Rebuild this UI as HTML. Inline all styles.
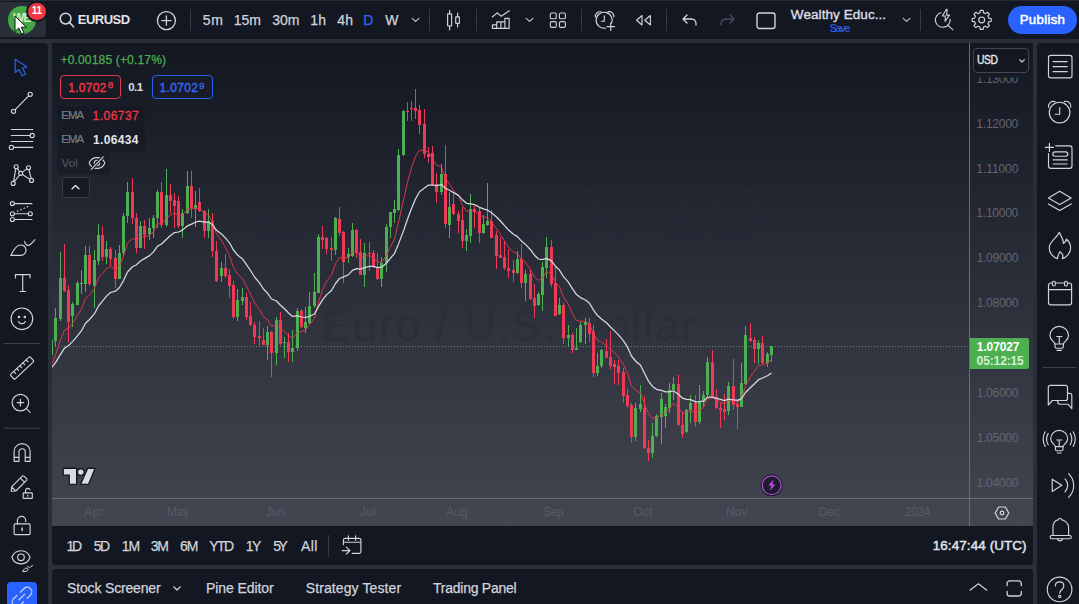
<!DOCTYPE html>
<html lang="en">
<head>
<meta charset="utf-8">
<title>EURUSD chart</title>
<style>
*{box-sizing:border-box;margin:0;padding:0}
html,body{width:1079px;height:604px;overflow:hidden;background:#2a2e39}
body{position:relative;font-family:"Liberation Sans",sans-serif;color:#d1d4dc;font-size:14px;-webkit-font-smoothing:antialiased}
.abs{position:absolute}
.t{position:absolute;white-space:nowrap;line-height:1}
#topbar{position:absolute;left:0;top:0;width:1079px;height:39px;background:#131722;border-top:1px solid #262a35}
#left{position:absolute;left:0;top:43px;width:48px;height:561px;background:#131722;border-top-right-radius:4px}
#right{position:absolute;left:1037px;top:43px;width:42px;height:561px;background:#131722;border-top-left-radius:4px}
#chart{position:absolute;left:52px;top:43px;width:981px;height:483px;background:linear-gradient(#131722,#434651);overflow:hidden}
#range{position:absolute;left:52px;top:526px;width:981px;height:38.6px;background:#131722;border-radius:0 0 4px 4px}
#bottom{position:absolute;left:52px;top:569px;width:981px;height:35px;background:#131722;border-radius:4px 4px 0 0}
.chartsvg{position:absolute;left:0;top:0}
.sep{position:absolute;width:1px;background:#363a45}
.hsep{position:absolute;height:1px;background:#434651}
svg.ic{position:absolute;overflow:visible;fill:none;stroke:#d1d4dc;stroke-width:1.2;stroke-linecap:round;stroke-linejoin:round}
.wm{position:absolute;white-space:nowrap;color:rgba(38,42,53,0.43);line-height:1}
.scale{position:absolute;left:925.5px;font-size:11.5px;color:#70737f;line-height:1;white-space:nowrap}
.tm{position:absolute;top:464px;font-size:12px;color:#666975;line-height:1;white-space:nowrap;transform:translateX(-50%)}
.lg{position:absolute;background:rgba(19,23,34,0.45);border-radius:2px}
</style>
</head>
<body>
<div id="topbar">
  <!-- avatar -->
  <div class="abs" style="left:0;top:1px;width:46px;height:35px;background:#2a2e39;border-radius:0 4px 4px 0"></div>
  <div class="abs" style="left:8px;top:5px;width:28px;height:28px;border-radius:50%;background:#43a843"></div>
  <div class="t" style="left:13px;top:11px;font-size:12px;font-weight:bold;color:#cfeccf;letter-spacing:-1px">WE</div>
  <div class="abs" style="left:26px;top:0px;width:22px;height:21px;border-radius:11px;background:#131722"></div>
  <div class="abs" style="left:28px;top:2px;width:18px;height:17px;border-radius:9px;background:#f23645"></div>
  <div class="t" style="left:31.8px;top:4.6px;font-size:10px;font-weight:bold;color:#fff;letter-spacing:-0.2px">11</div>
  <!-- mouse cursor -->
  <svg class="abs" style="left:14px;top:14px;overflow:visible" width="14" height="20" viewBox="0 0 14 20"><path d="M1 1 L1 16.5 L4.8 13 L7.6 19 L10 18 L7.3 12.2 L12.4 12.2 Z" fill="#fff" stroke="#111" stroke-width="1"/></svg>
  <!-- search -->
  <svg class="ic" style="left:58px;top:10px;stroke-width:1.6" width="18" height="18" viewBox="0 0 18 18"><circle cx="7.6" cy="7.6" r="5.4"/><path d="M11.6 11.6 L15.6 15.8"/></svg>
  <svg class="ic" style="left:156px;top:10px;stroke-width:1.3" width="20" height="20" viewBox="0 0 20 20"><circle cx="10.4" cy="9.6" r="9"/><path d="M10.4 5 V14.2 M5.8 9.6 H15"/></svg>
  <div class="sep" style="left:190px;top:8px;height:22px"></div>
  <svg class="ic" style="left:411px;top:16px;stroke-width:1.15;stroke:#c2c5cd" width="9" height="6" viewBox="0 0 9 6"><path d="M1.2 1.3 L4.6 4.4 L8 1.3"/></svg>
  <div class="sep" style="left:429px;top:8px;height:22px"></div>
  <!-- candles icon -->
  <svg class="ic" style="left:444px;top:8px;stroke-width:1.15" width="20" height="24" viewBox="0 0 20 24"><path d="M5.6 1.4 V4.8 M5.6 17 V20.8 M13.55 4 V7.8 M13.55 14.3 V17.9"/><rect x="3.6" y="4.8" width="4" height="12.2" rx="0.4"/><rect x="11.7" y="7.8" width="3.7" height="6.5" rx="0.4"/></svg>
  <div class="sep" style="left:476px;top:8px;height:22px"></div>
  <!-- indicators icon -->
  <svg class="ic" style="left:491px;top:9px;stroke-width:1.15" width="20" height="20" viewBox="0 0 20 20"><path d="M1.3 7 L6.2 2.9 L10.2 6.2 L18.3 0.8"/><path d="M1.4 18.4 V14.8 H5.7 V18.4 M5.7 14.8 V11.8 H9.9 V18.4 M9.9 11.8 H13.9 V18.4 M13.9 11.8 V8.3 H18.1 V18.4 H1.4"/></svg>
  <svg class="ic" style="left:524.5px;top:16px;stroke-width:1.15;stroke:#c2c5cd" width="9" height="6" viewBox="0 0 9 6"><path d="M1.2 1.3 L4.6 4.4 L8 1.3"/></svg>
  <!-- layout grid -->
  <svg class="ic" style="left:549px;top:9px;stroke-width:1.1" width="18" height="20" viewBox="0 0 18 20"><rect x="1.3" y="3" width="6" height="5.8" rx="1.4"/><rect x="10.4" y="3" width="6" height="5.8" rx="1.4"/><rect x="1.3" y="11.6" width="6" height="5.8" rx="1.4"/><rect x="10.4" y="11.6" width="6" height="5.8" rx="1.4"/></svg>
  <div class="sep" style="left:581px;top:8px;height:22px"></div>
  <!-- alert plus -->
  <svg class="ic" style="left:593px;top:8px;stroke-width:1.15" width="24" height="24" viewBox="0 0 24 24"><path d="M18.6 14.2 A8 8 0 1 0 12.6 19.1"/><path d="M11.3 6.8 V12.2 H8.4"/><path d="M2.4 8 A4.6 4.6 0 0 1 8 2.9 M15 2.9 A4.6 4.6 0 0 1 20.8 8"/><path d="M17.8 13.8 V21.4 M14 17.6 H21.6"/></svg>
  <!-- replay -->
  <svg class="ic" style="left:634px;top:13px;stroke-width:1.15" width="18" height="12" viewBox="0 0 18 12"><path d="M8 1.5 L2.6 6.2 L8 11 Z M16.4 1.5 L10.8 6.2 L16.4 11 Z"/></svg>
  <div class="sep" style="left:666px;top:8px;height:22px"></div>
  <!-- undo / redo -->
  <svg class="ic" style="left:682px;top:13px;stroke-width:1.3" width="15" height="12" viewBox="0 0 15 12"><path d="M5 1 L1 5 L5 9 M1 5 H9.5 A4.5 4.5 0 0 1 14 9.5 V11"/></svg>
  <svg class="ic" style="left:720px;top:13px;stroke-width:1.3;stroke:#4a4e5a" width="15" height="12" viewBox="0 0 15 12"><path d="M10 1 L14 5 L10 9 M14 5 H5.5 A4.5 4.5 0 0 0 1 9.5 V11"/></svg>
  <!-- square -->
  <svg class="ic" style="left:756px;top:11px;stroke-width:1.4" width="20" height="18" viewBox="0 0 20 18"><rect x="1" y="1" width="18" height="15.5" rx="2.5"/></svg>
  <svg class="ic" style="left:901.5px;top:16px;stroke-width:1.15;stroke:#c2c5cd" width="9" height="6" viewBox="0 0 9 6"><path d="M1.2 1.3 L4.6 4.4 L8 1.3"/></svg>
  <div class="sep" style="left:920px;top:8px;height:22px"></div>
  <!-- quick search -->
  <svg class="ic" style="left:933px;top:8px;stroke-width:1.15" width="22" height="24" viewBox="0 0 22 24"><path d="M7.9 3.7 A7.4 7.4 0 1 0 17.2 10.4"/><path d="M14.6 16.1 L19.8 20.6"/><path d="M13.5 0.3 L9.4 6.9 H12.4 L12 12.4 L16.5 6.1 H13.5 L14.2 0.6 Z" stroke-width="1.05"/></svg>
  <!-- gear -->
  <svg class="ic" style="left:971px;top:8px;stroke-width:1.15" width="22" height="22" viewBox="0 0 22 22"><circle cx="10.7" cy="10.9" r="2.9"/><path d="M8.93 3.82 L9.28 1.41 L12.12 1.41 L12.47 3.82 L14.46 4.64 L16.41 3.18 L18.42 5.19 L16.96 7.14 L17.78 9.13 L20.19 9.48 L20.19 12.32 L17.78 12.67 L16.96 14.66 L18.42 16.61 L16.41 18.62 L14.46 17.16 L12.47 17.98 L12.12 20.39 L9.28 20.39 L8.93 17.98 L6.94 17.16 L4.99 18.62 L2.98 16.61 L4.44 14.66 L3.62 12.67 L1.21 12.32 L1.21 9.48 L3.62 9.13 L4.44 7.14 L2.98 5.19 L4.99 3.18 L6.94 4.64 Z"/></svg>
  <div class="abs" style="left:1008px;top:5px;width:69px;height:28px;border-radius:14px;background:#2962ff"></div>
  <div class="t" id="sym" style="left:77.76px;top:11.86px;font-size:13px;color:#e3e5ea;letter-spacing:-0.51px;font-weight:bold;">EURUSD</div>
  <div class="t" id="tf1" style="left:202.87px;top:12.00px;font-size:14px;color:#d1d4dc;letter-spacing:0.53px;-webkit-text-stroke:0.25px #d1d4dc;">5m</div>
  <div class="t" id="tf2" style="left:233.64px;top:12.00px;font-size:14px;color:#d1d4dc;letter-spacing:0.04px;-webkit-text-stroke:0.25px #d1d4dc;">15m</div>
  <div class="t" id="tf3" style="left:272.33px;top:12.00px;font-size:14px;color:#d1d4dc;letter-spacing:-0.13px;-webkit-text-stroke:0.25px #d1d4dc;">30m</div>
  <div class="t" id="tf4" style="left:310.37px;top:12.00px;font-size:14px;color:#d1d4dc;letter-spacing:0.10px;-webkit-text-stroke:0.25px #d1d4dc;">1h</div>
  <div class="t" id="tf5" style="left:337.17px;top:12.00px;font-size:14px;color:#d1d4dc;letter-spacing:0.31px;-webkit-text-stroke:0.25px #d1d4dc;">4h</div>
  <div class="t" id="tf6" style="left:363.20px;top:12.00px;font-size:14px;color:#2f63f5;letter-spacing:0.00px;-webkit-text-stroke:0.25px #2f63f5;">D</div>
  <div class="t" id="tf7" style="left:385.29px;top:12.00px;font-size:14px;color:#d1d4dc;letter-spacing:0.00px;-webkit-text-stroke:0.25px #d1d4dc;">W</div>
  <div class="t" id="title" style="left:790.85px;top:6.75px;font-size:13.5px;color:#dcdee4;letter-spacing:0.07px;-webkit-text-stroke:0.38px #dcdee4;">Wealthy Educ...</div>
  <div class="t" id="save" style="left:829.73px;top:23.38px;font-size:10.4px;color:#2f63f5;letter-spacing:-1.07px;-webkit-text-stroke:0.15px #2f63f5;">Save</div>
  <div class="t" id="pub" style="left:1019.71px;top:11.71px;font-size:13.2px;color:#fff;letter-spacing:0.33px;-webkit-text-stroke:0.55px #fff;">Publish</div>
</div>
<style>.tf{font-size:14px;color:#d1d4dc;letter-spacing:-0.4px;-webkit-text-stroke:0.25px}</style>

<div id="left">
<svg class="ic" style="left:0;top:0;stroke-width:1.15" width="48" height="561" viewBox="0 43 48 561">
  <!-- cursor -->
  <path d="M15.2 59.2 L15.2 72.6 L19 69.6 L22.2 75.8 L25.6 74.2 L22.6 68.2 L26.8 66.8 Z" stroke="#2a5ad8" stroke-width="1.3"/>
  <!-- trend line -->
  <circle cx="30.2" cy="94.3" r="2.1"/><circle cx="13.5" cy="111.3" r="2.1"/><path d="M28.7 95.8 L15 109.8"/>
  <!-- fib -->
  <path d="M11.3 129.5 H32.8 M11.3 135.5 H30 M11.3 141.5 H32.8 M13.6 147.4 H32.8"/><circle cx="32.2" cy="135.5" r="2.1"/><circle cx="11.4" cy="147.4" r="2.1"/>
  <!-- pattern -->
  <circle cx="16.2" cy="166.7" r="2"/><circle cx="28.5" cy="167.7" r="2"/><circle cx="20.7" cy="173.3" r="2"/><circle cx="31.5" cy="180.4" r="2"/><circle cx="13.2" cy="183.4" r="2"/>
  <path d="M17.3 168.4 L19.6 171.6 M22.3 172.1 L26.9 168.9 M28.9 169.7 L31.1 178.4 M29.8 179.3 L22.4 174.4 M19.6 175 L14.3 181.7 M13.6 181.4 L15.8 168.7"/>
  <!-- forecast -->
  <circle cx="12.4" cy="203.6" r="2"/><circle cx="12.4" cy="213.7" r="2"/><circle cx="30.3" cy="213.7" r="2"/><circle cx="12.4" cy="219.5" r="2"/>
  <path d="M14.5 203.6 H32 M14.5 213.7 H28.2 M14.5 219.5 H32"/><path d="M17.4 211.2 L29.8 205.7" stroke-dasharray="0.5 3.1" stroke-width="1.3"/>
  <!-- brush -->
  <path d="M10.8 255.4 C13.5 250 15.5 246.5 19 245.3 C22.5 244.2 25.6 246.4 26 249.5 C26.3 252.6 24 255.4 21 255.4 Z"/><path d="M24.6 241.3 C25 244.6 27.4 246.2 29.6 244.9 C31.4 243.8 33.2 241.6 34.9 239.6"/>
  <!-- text T -->
  <path d="M15.4 277.9 V274.6 H30.1 V277.9 M22.7 274.6 V291.5 M19.9 291.5 H25.7"/>
  <!-- smiley -->
  <circle cx="21.9" cy="318.8" r="10.8"/><circle cx="19" cy="317" r="0.7" fill="#d1d4dc"/><circle cx="24.8" cy="317" r="0.7" fill="#d1d4dc"/><path d="M18.4 321.4 C19.8 324.4 24 324.4 25.4 321.4"/>
  <path d="M4 343.6 H40" stroke="#434651" stroke-width="1"/>
  <!-- ruler -->
  <g transform="translate(22.1 368) rotate(-43)"><rect x="-13.4" y="-3.2" width="26.8" height="6.4" rx="1"/><path d="M-8.5 -3.2 V-0.6 M-4.2 -3.2 V-0.6 M0 -3.2 V-0.6 M4.2 -3.2 V-0.6 M8.5 -3.2 V-0.6"/></g>
  <!-- zoom -->
  <circle cx="20.4" cy="402.6" r="8.3"/><path d="M20.4 399.3 V405.9 M17.1 402.6 H23.7 M26.4 408.6 L30.2 412.4"/>
  <path d="M4 428.2 H40" stroke="#434651" stroke-width="1"/>
  <!-- magnet -->
  <path d="M14.1 461.4 V451.6 A8 8 0 0 1 30.1 451.6 V461.4 H25.2 V451.8 A3.1 3.1 0 0 0 19 451.8 V461.4 Z M14.1 457.3 H19 M25.2 457.3 H30.1"/>
  <!-- pencil + lock -->
  <path d="M11.3 491.2 L11.6 486.8 L22.3 476.2 A1.2 1.2 0 0 1 24 476.2 L26.5 478.7 A1.2 1.2 0 0 1 26.5 480.4 L15.8 491 Z M11.6 486.8 L15.8 491 M20.4 478.1 L24.6 482.3"/>
  <rect x="23.2" y="492.8" width="9.1" height="5.6" rx="0.6" fill="#131722"/><path d="M25.6 492.8 V490.3 A2.2 2.2 0 0 1 29.9 489.9"/><path d="M27.8 495 V496.2"/>
  <!-- lock open -->
  <rect x="14.1" y="523.9" width="16" height="10.7" rx="1.2"/><path d="M17.4 523.9 V520.6 A4.15 4.15 0 0 1 25.7 520.6 V521.6"/><path d="M22.1 528 V530.4" stroke-width="1.5"/>
  <!-- eye -->
  <path d="M11.9 557.3 C15 548.5 27 548.5 30.1 557.3 C27 566.1 15 566.1 11.9 557.3 Z"/><circle cx="21" cy="557.3" r="3.3"/>
  <path d="M22.8 571.2 C24.2 568.6 25.6 567.6 27.2 568.2 C28.6 568.8 28.2 571 26.4 571.3 Z M27.6 566.2 C28.4 567.8 29.4 567.8 30.2 567.2 L32.6 565.4" stroke-width="1"/>
  <!-- link button -->
  <rect x="7" y="582" width="30" height="30" rx="4" fill="#2962ff" stroke="none"/>
  <g stroke="#c3d2ff" stroke-width="1.25"><path d="M20.3 592.2 L24.05 588.45 A4.6 4.6 0 0 1 30.55 594.95 L27.1 598.4 M23.6 601.7 L19.85 605.45 A4.6 4.6 0 0 1 13.35 598.95 L16.8 595.5 M19.1 599.8 L24.8 594.1"/></g>
</svg>

</div>

<div id="chart">
  <div class="wm" id="wm1" style="left:201.6px;top:129.5px;font-size:80px;letter-spacing:3.1px">EURUSD, 1D</div>
  <div class="wm" id="wm2" style="left:269.3px;top:260.6px;font-size:44px;letter-spacing:1.9px">Euro / U.S. Dollar</div>
<svg class="chartsvg" width="981" height="483" viewBox="52 43 981 483">
<line x1="52" y1="346.5" x2="970" y2="346.5" stroke="#86cc8a" stroke-width="1" stroke-dasharray="1 2" opacity="0.6"/>
<g shape-rendering="crispEdges"><rect x="51" y="340" width="1" height="15" fill="#4caf50"/><rect x="55" y="308" width="1" height="39" fill="#4caf50"/><rect x="60" y="252" width="1" height="69" fill="#4caf50"/><rect x="64" y="244" width="1" height="48" fill="#ef3a57"/><rect x="68" y="285" width="1" height="57" fill="#ef3a57"/><rect x="72" y="302" width="1" height="25" fill="#4caf50"/><rect x="77" y="281" width="1" height="24" fill="#4caf50"/><rect x="81" y="270" width="1" height="24" fill="#4caf50"/><rect x="85" y="246" width="1" height="46" fill="#4caf50"/><rect x="89" y="246" width="1" height="40" fill="#ef3a57"/><rect x="94" y="250" width="1" height="58" fill="#4caf50"/><rect x="98" y="224" width="1" height="41" fill="#4caf50"/><rect x="102" y="226" width="1" height="35" fill="#ef3a57"/><rect x="106" y="241" width="1" height="23" fill="#4caf50"/><rect x="110" y="247" width="1" height="19" fill="#ef3a57"/><rect x="115" y="250" width="1" height="38" fill="#ef3a57"/><rect x="119" y="245" width="1" height="34" fill="#4caf50"/><rect x="123" y="213" width="1" height="43" fill="#4caf50"/><rect x="127" y="182" width="1" height="41" fill="#4caf50"/><rect x="132" y="178" width="1" height="46" fill="#ef3a57"/><rect x="136" y="213" width="1" height="40" fill="#ef3a57"/><rect x="140" y="221" width="1" height="27" fill="#4caf50"/><rect x="144" y="220" width="1" height="29" fill="#ef3a57"/><rect x="149" y="218" width="1" height="22" fill="#4caf50"/><rect x="153" y="215" width="1" height="23" fill="#4caf50"/><rect x="157" y="190" width="1" height="38" fill="#4caf50"/><rect x="161" y="182" width="1" height="46" fill="#ef3a57"/><rect x="166" y="169" width="1" height="58" fill="#4caf50"/><rect x="170" y="184" width="1" height="29" fill="#ef3a57"/><rect x="174" y="193" width="1" height="35" fill="#ef3a57"/><rect x="178" y="196" width="1" height="32" fill="#ef3a57"/><rect x="182" y="209" width="1" height="29" fill="#4caf50"/><rect x="187" y="171" width="1" height="43" fill="#4caf50"/><rect x="191" y="171" width="1" height="47" fill="#ef3a57"/><rect x="195" y="191" width="1" height="36" fill="#4caf50"/><rect x="199" y="188" width="1" height="24" fill="#ef3a57"/><rect x="204" y="210" width="1" height="28" fill="#ef3a57"/><rect x="208" y="209" width="1" height="29" fill="#4caf50"/><rect x="212" y="213" width="1" height="44" fill="#ef3a57"/><rect x="216" y="241" width="1" height="41" fill="#ef3a57"/><rect x="221" y="262" width="1" height="20" fill="#4caf50"/><rect x="225" y="254" width="1" height="24" fill="#ef3a57"/><rect x="229" y="269" width="1" height="29" fill="#ef3a57"/><rect x="233" y="281" width="1" height="38" fill="#ef3a57"/><rect x="237" y="289" width="1" height="32" fill="#4caf50"/><rect x="242" y="288" width="1" height="17" fill="#4caf50"/><rect x="246" y="293" width="1" height="27" fill="#ef3a57"/><rect x="250" y="302" width="1" height="24" fill="#ef3a57"/><rect x="254" y="322" width="1" height="22" fill="#ef3a57"/><rect x="259" y="321" width="1" height="25" fill="#ef3a57"/><rect x="263" y="328" width="1" height="17" fill="#ef3a57"/><rect x="267" y="326" width="1" height="34" fill="#4caf50"/><rect x="271" y="331" width="1" height="46" fill="#ef3a57"/><rect x="276" y="317" width="1" height="48" fill="#4caf50"/><rect x="280" y="312" width="1" height="33" fill="#ef3a57"/><rect x="284" y="337" width="1" height="21" fill="#4caf50"/><rect x="288" y="333" width="1" height="29" fill="#ef3a57"/><rect x="292" y="330" width="1" height="32" fill="#4caf50"/><rect x="297" y="308" width="1" height="43" fill="#4caf50"/><rect x="301" y="309" width="1" height="19" fill="#ef3a57"/><rect x="305" y="307" width="1" height="26" fill="#4caf50"/><rect x="309" y="292" width="1" height="32" fill="#4caf50"/><rect x="314" y="273" width="1" height="35" fill="#4caf50"/><rect x="318" y="234" width="1" height="59" fill="#4caf50"/><rect x="322" y="226" width="1" height="23" fill="#ef3a57"/><rect x="326" y="237" width="1" height="17" fill="#ef3a57"/><rect x="331" y="237" width="1" height="24" fill="#ef3a57"/><rect x="335" y="217" width="1" height="38" fill="#4caf50"/><rect x="339" y="207" width="1" height="29" fill="#ef3a57"/><rect x="343" y="231" width="1" height="52" fill="#ef3a57"/><rect x="348" y="248" width="1" height="15" fill="#4caf50"/><rect x="352" y="223" width="1" height="34" fill="#4caf50"/><rect x="356" y="229" width="1" height="29" fill="#ef3a57"/><rect x="360" y="239" width="1" height="36" fill="#ef3a57"/><rect x="364" y="243" width="1" height="44" fill="#4caf50"/><rect x="369" y="242" width="1" height="29" fill="#ef3a57"/><rect x="373" y="250" width="1" height="18" fill="#ef3a57"/><rect x="377" y="253" width="1" height="27" fill="#ef3a57"/><rect x="381" y="257" width="1" height="30" fill="#4caf50"/><rect x="386" y="224" width="1" height="48" fill="#4caf50"/><rect x="390" y="212" width="1" height="26" fill="#4caf50"/><rect x="394" y="200" width="1" height="23" fill="#4caf50"/><rect x="398" y="149" width="1" height="62" fill="#4caf50"/><rect x="403" y="110" width="1" height="46" fill="#4caf50"/><rect x="407" y="102" width="1" height="19" fill="#ef3a57"/><rect x="411" y="101" width="1" height="20" fill="#ef3a57"/><rect x="415" y="89" width="1" height="30" fill="#ef3a57"/><rect x="419" y="105" width="1" height="29" fill="#ef3a57"/><rect x="424" y="109" width="1" height="49" fill="#ef3a57"/><rect x="428" y="147" width="1" height="16" fill="#ef3a57"/><rect x="432" y="146" width="1" height="40" fill="#ef3a57"/><rect x="436" y="173" width="1" height="30" fill="#ef3a57"/><rect x="441" y="164" width="1" height="31" fill="#4caf50"/><rect x="445" y="145" width="1" height="83" fill="#ef3a57"/><rect x="449" y="192" width="1" height="46" fill="#4caf50"/><rect x="453" y="194" width="1" height="21" fill="#ef3a57"/><rect x="458" y="211" width="1" height="22" fill="#ef3a57"/><rect x="462" y="207" width="1" height="41" fill="#ef3a57"/><rect x="466" y="229" width="1" height="22" fill="#4caf50"/><rect x="470" y="194" width="1" height="49" fill="#4caf50"/><rect x="474" y="206" width="1" height="22" fill="#ef3a57"/><rect x="479" y="208" width="1" height="35" fill="#ef3a57"/><rect x="483" y="215" width="1" height="19" fill="#4caf50"/><rect x="487" y="183" width="1" height="43" fill="#4caf50"/><rect x="491" y="210" width="1" height="28" fill="#ef3a57"/><rect x="496" y="231" width="1" height="38" fill="#ef3a57"/><rect x="500" y="237" width="1" height="21" fill="#ef3a57"/><rect x="504" y="241" width="1" height="29" fill="#ef3a57"/><rect x="508" y="249" width="1" height="29" fill="#ef3a57"/><rect x="513" y="260" width="1" height="22" fill="#ef3a57"/><rect x="517" y="251" width="1" height="23" fill="#4caf50"/><rect x="521" y="244" width="1" height="44" fill="#ef3a57"/><rect x="525" y="270" width="1" height="31" fill="#4caf50"/><rect x="530" y="269" width="1" height="31" fill="#ef3a57"/><rect x="534" y="284" width="1" height="34" fill="#ef3a57"/><rect x="538" y="292" width="1" height="14" fill="#4caf50"/><rect x="542" y="262" width="1" height="49" fill="#4caf50"/><rect x="546" y="237" width="1" height="41" fill="#4caf50"/><rect x="551" y="240" width="1" height="47" fill="#ef3a57"/><rect x="555" y="267" width="1" height="49" fill="#ef3a57"/><rect x="559" y="298" width="1" height="17" fill="#4caf50"/><rect x="563" y="303" width="1" height="41" fill="#ef3a57"/><rect x="568" y="325" width="1" height="21" fill="#4caf50"/><rect x="572" y="333" width="1" height="20" fill="#ef3a57"/><rect x="576" y="328" width="1" height="22" fill="#4caf50"/><rect x="580" y="322" width="1" height="21" fill="#4caf50"/><rect x="585" y="318" width="1" height="26" fill="#4caf50"/><rect x="589" y="318" width="1" height="24" fill="#ef3a57"/><rect x="593" y="325" width="1" height="52" fill="#ef3a57"/><rect x="597" y="353" width="1" height="23" fill="#4caf50"/><rect x="601" y="349" width="1" height="19" fill="#4caf50"/><rect x="606" y="339" width="1" height="19" fill="#ef3a57"/><rect x="610" y="331" width="1" height="38" fill="#ef3a57"/><rect x="614" y="360" width="1" height="24" fill="#ef3a57"/><rect x="618" y="360" width="1" height="25" fill="#ef3a57"/><rect x="623" y="368" width="1" height="35" fill="#ef3a57"/><rect x="627" y="389" width="1" height="19" fill="#ef3a57"/><rect x="631" y="403" width="1" height="40" fill="#ef3a57"/><rect x="635" y="403" width="1" height="38" fill="#4caf50"/><rect x="640" y="385" width="1" height="27" fill="#4caf50"/><rect x="644" y="396" width="1" height="53" fill="#ef3a57"/><rect x="648" y="440" width="1" height="21" fill="#ef3a57"/><rect x="652" y="423" width="1" height="35" fill="#4caf50"/><rect x="656" y="414" width="1" height="23" fill="#4caf50"/><rect x="661" y="393" width="1" height="51" fill="#4caf50"/><rect x="665" y="404" width="1" height="24" fill="#4caf50"/><rect x="669" y="383" width="1" height="30" fill="#4caf50"/><rect x="673" y="377" width="1" height="23" fill="#4caf50"/><rect x="678" y="375" width="1" height="51" fill="#ef3a57"/><rect x="682" y="412" width="1" height="26" fill="#ef3a57"/><rect x="686" y="409" width="1" height="24" fill="#4caf50"/><rect x="690" y="395" width="1" height="28" fill="#4caf50"/><rect x="695" y="395" width="1" height="32" fill="#ef3a57"/><rect x="699" y="385" width="1" height="39" fill="#4caf50"/><rect x="703" y="391" width="1" height="16" fill="#4caf50"/><rect x="707" y="357" width="1" height="40" fill="#4caf50"/><rect x="712" y="350" width="1" height="48" fill="#ef3a57"/><rect x="716" y="389" width="1" height="20" fill="#ef3a57"/><rect x="720" y="403" width="1" height="25" fill="#ef3a57"/><rect x="724" y="394" width="1" height="26" fill="#ef3a57"/><rect x="728" y="382" width="1" height="33" fill="#4caf50"/><rect x="733" y="359" width="1" height="51" fill="#ef3a57"/><rect x="737" y="399" width="1" height="30" fill="#ef3a57"/><rect x="741" y="363" width="1" height="44" fill="#4caf50"/><rect x="745" y="326" width="1" height="59" fill="#4caf50"/><rect x="750" y="323" width="1" height="19" fill="#ef3a57"/><rect x="754" y="337" width="1" height="26" fill="#ef3a57"/><rect x="758" y="340" width="1" height="24" fill="#4caf50"/><rect x="762" y="336" width="1" height="28" fill="#ef3a57"/><rect x="767" y="352" width="1" height="15" fill="#4caf50"/><rect x="771" y="346" width="1" height="16" fill="#4caf50"/><rect x="50" y="340" width="3" height="15" fill="#4caf50"/><rect x="54" y="318" width="3" height="23" fill="#4caf50"/><rect x="59" y="278" width="3" height="41" fill="#4caf50"/><rect x="63" y="278" width="3" height="13" fill="#ef3a57"/><rect x="67" y="290" width="3" height="32" fill="#ef3a57"/><rect x="71" y="304" width="3" height="12" fill="#4caf50"/><rect x="76" y="283" width="3" height="22" fill="#4caf50"/><rect x="80" y="283" width="3" height="1" fill="#4caf50"/><rect x="84" y="255" width="3" height="29" fill="#4caf50"/><rect x="88" y="255" width="3" height="29" fill="#ef3a57"/><rect x="93" y="260" width="3" height="26" fill="#4caf50"/><rect x="97" y="235" width="3" height="26" fill="#4caf50"/><rect x="101" y="235" width="3" height="22" fill="#ef3a57"/><rect x="105" y="249" width="3" height="8" fill="#4caf50"/><rect x="109" y="249" width="3" height="10" fill="#ef3a57"/><rect x="114" y="258" width="3" height="21" fill="#ef3a57"/><rect x="118" y="253" width="3" height="26" fill="#4caf50"/><rect x="122" y="216" width="3" height="37" fill="#4caf50"/><rect x="126" y="192" width="3" height="24" fill="#4caf50"/><rect x="131" y="192" width="3" height="26" fill="#ef3a57"/><rect x="135" y="218" width="3" height="30" fill="#ef3a57"/><rect x="139" y="226" width="3" height="22" fill="#4caf50"/><rect x="143" y="226" width="3" height="9" fill="#ef3a57"/><rect x="148" y="228" width="3" height="6" fill="#4caf50"/><rect x="152" y="218" width="3" height="10" fill="#4caf50"/><rect x="156" y="192" width="3" height="26" fill="#4caf50"/><rect x="160" y="192" width="3" height="33" fill="#ef3a57"/><rect x="165" y="195" width="3" height="30" fill="#4caf50"/><rect x="169" y="195" width="3" height="6" fill="#ef3a57"/><rect x="173" y="200" width="3" height="6" fill="#ef3a57"/><rect x="177" y="201" width="3" height="25" fill="#ef3a57"/><rect x="181" y="213" width="3" height="13" fill="#4caf50"/><rect x="186" y="186" width="3" height="27" fill="#4caf50"/><rect x="190" y="186" width="3" height="22" fill="#ef3a57"/><rect x="194" y="205" width="3" height="4" fill="#4caf50"/><rect x="198" y="202" width="3" height="9" fill="#ef3a57"/><rect x="203" y="211" width="3" height="20" fill="#ef3a57"/><rect x="207" y="221" width="3" height="10" fill="#4caf50"/><rect x="211" y="221" width="3" height="30" fill="#ef3a57"/><rect x="215" y="251" width="3" height="30" fill="#ef3a57"/><rect x="220" y="268" width="3" height="8" fill="#4caf50"/><rect x="224" y="268" width="3" height="8" fill="#ef3a57"/><rect x="228" y="275" width="3" height="11" fill="#ef3a57"/><rect x="232" y="285" width="3" height="32" fill="#ef3a57"/><rect x="236" y="300" width="3" height="17" fill="#4caf50"/><rect x="241" y="297" width="3" height="4" fill="#4caf50"/><rect x="245" y="297" width="3" height="20" fill="#ef3a57"/><rect x="249" y="316" width="3" height="9" fill="#ef3a57"/><rect x="253" y="325" width="3" height="12" fill="#ef3a57"/><rect x="258" y="336" width="3" height="2" fill="#ef3a57"/><rect x="262" y="340" width="3" height="5" fill="#ef3a57"/><rect x="266" y="332" width="3" height="13" fill="#4caf50"/><rect x="270" y="332" width="3" height="21" fill="#ef3a57"/><rect x="275" y="320" width="3" height="33" fill="#4caf50"/><rect x="279" y="320" width="3" height="24" fill="#ef3a57"/><rect x="283" y="342" width="3" height="1" fill="#4caf50"/><rect x="287" y="342" width="3" height="10" fill="#ef3a57"/><rect x="291" y="348" width="3" height="4" fill="#4caf50"/><rect x="296" y="311" width="3" height="37" fill="#4caf50"/><rect x="300" y="311" width="3" height="16" fill="#ef3a57"/><rect x="304" y="322" width="3" height="6" fill="#4caf50"/><rect x="308" y="306" width="3" height="17" fill="#4caf50"/><rect x="313" y="292" width="3" height="14" fill="#4caf50"/><rect x="317" y="237" width="3" height="56" fill="#4caf50"/><rect x="321" y="237" width="3" height="3" fill="#ef3a57"/><rect x="325" y="238" width="3" height="11" fill="#ef3a57"/><rect x="330" y="248" width="3" height="2" fill="#ef3a57"/><rect x="334" y="218" width="3" height="32" fill="#4caf50"/><rect x="338" y="219" width="3" height="14" fill="#ef3a57"/><rect x="342" y="232" width="3" height="30" fill="#ef3a57"/><rect x="347" y="254" width="3" height="3" fill="#4caf50"/><rect x="351" y="230" width="3" height="26" fill="#4caf50"/><rect x="355" y="230" width="3" height="23" fill="#ef3a57"/><rect x="359" y="252" width="3" height="23" fill="#ef3a57"/><rect x="363" y="253" width="3" height="22" fill="#4caf50"/><rect x="368" y="253" width="3" height="1" fill="#ef3a57"/><rect x="372" y="253" width="3" height="14" fill="#ef3a57"/><rect x="376" y="267" width="3" height="12" fill="#ef3a57"/><rect x="380" y="263" width="3" height="16" fill="#4caf50"/><rect x="385" y="227" width="3" height="36" fill="#4caf50"/><rect x="389" y="212" width="3" height="15" fill="#4caf50"/><rect x="393" y="209" width="3" height="4" fill="#4caf50"/><rect x="397" y="155" width="3" height="55" fill="#4caf50"/><rect x="402" y="111" width="3" height="44" fill="#4caf50"/><rect x="406" y="111" width="3" height="1" fill="#ef3a57"/><rect x="410" y="108" width="3" height="1" fill="#ef3a57"/><rect x="414" y="108" width="3" height="3" fill="#ef3a57"/><rect x="418" y="110" width="3" height="15" fill="#ef3a57"/><rect x="423" y="124" width="3" height="30" fill="#ef3a57"/><rect x="427" y="154" width="3" height="3" fill="#ef3a57"/><rect x="431" y="153" width="3" height="32" fill="#ef3a57"/><rect x="435" y="184" width="3" height="8" fill="#ef3a57"/><rect x="440" y="174" width="3" height="18" fill="#4caf50"/><rect x="444" y="174" width="3" height="50" fill="#ef3a57"/><rect x="448" y="207" width="3" height="18" fill="#4caf50"/><rect x="452" y="204" width="3" height="10" fill="#ef3a57"/><rect x="457" y="214" width="3" height="7" fill="#ef3a57"/><rect x="461" y="220" width="3" height="21" fill="#ef3a57"/><rect x="465" y="235" width="3" height="6" fill="#4caf50"/><rect x="469" y="209" width="3" height="27" fill="#4caf50"/><rect x="473" y="209" width="3" height="3" fill="#ef3a57"/><rect x="478" y="211" width="3" height="22" fill="#ef3a57"/><rect x="482" y="224" width="3" height="9" fill="#4caf50"/><rect x="486" y="221" width="3" height="4" fill="#4caf50"/><rect x="490" y="221" width="3" height="17" fill="#ef3a57"/><rect x="495" y="235" width="3" height="21" fill="#ef3a57"/><rect x="499" y="255" width="3" height="3" fill="#ef3a57"/><rect x="503" y="257" width="3" height="11" fill="#ef3a57"/><rect x="507" y="268" width="3" height="3" fill="#ef3a57"/><rect x="512" y="270" width="3" height="3" fill="#ef3a57"/><rect x="516" y="259" width="3" height="14" fill="#4caf50"/><rect x="520" y="259" width="3" height="24" fill="#ef3a57"/><rect x="524" y="274" width="3" height="9" fill="#4caf50"/><rect x="529" y="274" width="3" height="25" fill="#ef3a57"/><rect x="533" y="298" width="3" height="8" fill="#ef3a57"/><rect x="537" y="294" width="3" height="11" fill="#4caf50"/><rect x="541" y="267" width="3" height="28" fill="#4caf50"/><rect x="545" y="247" width="3" height="21" fill="#4caf50"/><rect x="550" y="247" width="3" height="37" fill="#ef3a57"/><rect x="554" y="283" width="3" height="33" fill="#ef3a57"/><rect x="558" y="305" width="3" height="9" fill="#4caf50"/><rect x="562" y="305" width="3" height="33" fill="#ef3a57"/><rect x="567" y="335" width="3" height="3" fill="#4caf50"/><rect x="571" y="335" width="3" height="15" fill="#ef3a57"/><rect x="575" y="348" width="3" height="2" fill="#4caf50"/><rect x="579" y="325" width="3" height="17" fill="#4caf50"/><rect x="584" y="322" width="3" height="3" fill="#4caf50"/><rect x="588" y="323" width="3" height="11" fill="#ef3a57"/><rect x="592" y="332" width="3" height="41" fill="#ef3a57"/><rect x="596" y="366" width="3" height="7" fill="#4caf50"/><rect x="600" y="350" width="3" height="16" fill="#4caf50"/><rect x="605" y="351" width="3" height="7" fill="#ef3a57"/><rect x="609" y="357" width="3" height="9" fill="#ef3a57"/><rect x="613" y="364" width="3" height="3" fill="#ef3a57"/><rect x="617" y="366" width="3" height="7" fill="#ef3a57"/><rect x="622" y="372" width="3" height="24" fill="#ef3a57"/><rect x="626" y="395" width="3" height="11" fill="#ef3a57"/><rect x="630" y="405" width="3" height="32" fill="#ef3a57"/><rect x="634" y="408" width="3" height="29" fill="#4caf50"/><rect x="639" y="404" width="3" height="5" fill="#4caf50"/><rect x="643" y="408" width="3" height="40" fill="#ef3a57"/><rect x="647" y="448" width="3" height="5" fill="#ef3a57"/><rect x="651" y="436" width="3" height="17" fill="#4caf50"/><rect x="655" y="416" width="3" height="20" fill="#4caf50"/><rect x="660" y="399" width="3" height="18" fill="#4caf50"/><rect x="664" y="407" width="3" height="9" fill="#4caf50"/><rect x="668" y="390" width="3" height="18" fill="#4caf50"/><rect x="672" y="384" width="3" height="6" fill="#4caf50"/><rect x="677" y="384" width="3" height="41" fill="#ef3a57"/><rect x="681" y="425" width="3" height="9" fill="#ef3a57"/><rect x="685" y="410" width="3" height="22" fill="#4caf50"/><rect x="689" y="403" width="3" height="7" fill="#4caf50"/><rect x="694" y="403" width="3" height="19" fill="#ef3a57"/><rect x="698" y="401" width="3" height="21" fill="#4caf50"/><rect x="702" y="395" width="3" height="7" fill="#4caf50"/><rect x="706" y="362" width="3" height="33" fill="#4caf50"/><rect x="711" y="362" width="3" height="35" fill="#ef3a57"/><rect x="715" y="397" width="3" height="11" fill="#ef3a57"/><rect x="719" y="408" width="3" height="2" fill="#ef3a57"/><rect x="723" y="409" width="3" height="3" fill="#ef3a57"/><rect x="727" y="386" width="3" height="25" fill="#4caf50"/><rect x="732" y="386" width="3" height="19" fill="#ef3a57"/><rect x="736" y="404" width="3" height="3" fill="#ef3a57"/><rect x="740" y="383" width="3" height="24" fill="#4caf50"/><rect x="744" y="335" width="3" height="49" fill="#4caf50"/><rect x="749" y="338" width="3" height="3" fill="#ef3a57"/><rect x="753" y="340" width="3" height="9" fill="#ef3a57"/><rect x="757" y="343" width="3" height="6" fill="#4caf50"/><rect x="761" y="343" width="3" height="20" fill="#ef3a57"/><rect x="766" y="354" width="3" height="9" fill="#4caf50"/><rect x="770" y="346" width="3" height="9" fill="#4caf50"/></g>
<path d="M51.5 364.6 L55.5 355.2 L60.5 339.8 L64.5 330.0 L68.5 328.4 L72.5 323.5 L77.5 315.3 L81.5 308.9 L85.5 298.1 L89.5 295.3 L94.5 288.2 L98.5 277.6 L102.5 273.4 L106.5 268.6 L110.5 266.7 L115.5 269.2 L119.5 266.1 L123.5 256.1 L127.5 243.3 L132.5 238.2 L136.5 240.1 L140.5 237.3 L144.5 236.9 L149.5 235.2 L153.5 231.8 L157.5 223.8 L161.5 224.0 L166.5 218.2 L170.5 214.8 L174.5 213.0 L178.5 215.6 L182.5 215.1 L187.5 209.2 L191.5 209.1 L195.5 208.3 L199.5 208.8 L204.5 213.2 L208.5 214.8 L212.5 222.0 L216.5 233.8 L221.5 240.7 L225.5 247.8 L229.5 255.4 L233.5 267.7 L237.5 274.1 L242.5 278.6 L246.5 286.3 L250.5 294.1 L254.5 302.7 L259.5 309.7 L263.5 316.7 L267.5 319.8 L271.5 326.3 L276.5 325.1 L280.5 328.9 L284.5 331.5 L288.5 335.5 L292.5 338.1 L297.5 332.7 L301.5 331.5 L305.5 329.6 L309.5 324.9 L314.5 318.3 L318.5 302.0 L322.5 289.5 L326.5 281.4 L331.5 275.0 L335.5 263.7 L339.5 257.5 L343.5 258.3 L348.5 257.5 L352.5 252.0 L356.5 252.2 L360.5 256.7 L364.5 256.0 L369.5 255.7 L373.5 257.9 L377.5 262.2 L381.5 262.3 L386.5 255.2 L390.5 246.6 L394.5 239.1 L398.5 222.3 L403.5 200.0 L407.5 182.3 L411.5 167.7 L415.5 156.4 L419.5 150.0 L424.5 150.9 L428.5 152.1 L432.5 158.7 L436.5 165.3 L441.5 167.0 L445.5 178.5 L449.5 184.2 L453.5 190.2 L458.5 196.4 L462.5 205.3 L466.5 211.2 L470.5 210.8 L474.5 211.0 L479.5 215.3 L483.5 217.0 L487.5 217.8 L491.5 221.8 L496.5 228.6 L500.5 234.4 L504.5 241.2 L508.5 247.1 L513.5 252.2 L517.5 253.6 L521.5 259.5 L525.5 262.4 L530.5 269.7 L534.5 277.1 L538.5 280.4 L542.5 277.7 L546.5 271.5 L551.5 273.9 L555.5 282.3 L559.5 286.9 L563.5 297.0 L568.5 304.6 L572.5 313.6 L576.5 320.4 L580.5 321.3 L585.5 321.4 L589.5 324.0 L593.5 333.9 L597.5 340.4 L601.5 342.3 L606.5 345.4 L610.5 349.5 L614.5 352.9 L618.5 356.9 L623.5 364.7 L627.5 372.9 L631.5 385.7 L635.5 390.1 L640.5 392.9 L644.5 404.0 L648.5 413.7 L652.5 418.2 L656.5 417.7 L661.5 414.0 L665.5 412.6 L669.5 408.0 L673.5 403.3 L678.5 407.6 L682.5 413.0 L686.5 412.4 L690.5 410.4 L695.5 412.7 L699.5 410.3 L703.5 407.3 L707.5 398.2 L712.5 397.9 L716.5 400.0 L720.5 402.0 L724.5 403.9 L728.5 400.3 L733.5 401.3 L737.5 402.4 L741.5 398.5 L745.5 385.8 L750.5 376.8 L754.5 371.2 L758.5 365.5 L762.5 364.9 L767.5 362.8 L771.5 359.5" fill="none" stroke="#e8364c" stroke-width="1" opacity="0.92" stroke-linejoin="round"/>
<path d="M51.5 367.5 L55.5 362.6 L60.5 354.4 L64.5 348.2 L68.5 345.6 L72.5 341.6 L77.5 335.8 L81.5 330.7 L85.5 323.3 L89.5 319.5 L94.5 313.7 L98.5 306.0 L102.5 301.2 L106.5 296.1 L110.5 292.5 L115.5 291.2 L119.5 287.5 L123.5 280.6 L127.5 272.0 L132.5 266.7 L136.5 264.8 L140.5 261.0 L144.5 258.6 L149.5 255.6 L153.5 251.9 L157.5 246.1 L161.5 244.0 L166.5 239.2 L170.5 235.5 L174.5 232.6 L178.5 232.0 L182.5 230.1 L187.5 225.8 L191.5 224.1 L195.5 222.2 L199.5 221.1 L204.5 222.1 L208.5 222.0 L212.5 224.8 L216.5 230.3 L221.5 234.0 L225.5 238.1 L229.5 242.8 L233.5 250.0 L237.5 254.9 L242.5 258.9 L246.5 264.6 L250.5 270.5 L254.5 277.0 L259.5 282.9 L263.5 289.0 L267.5 293.2 L271.5 299.0 L276.5 301.0 L280.5 305.2 L284.5 308.8 L288.5 313.0 L292.5 316.4 L297.5 315.9 L301.5 317.0 L305.5 317.5 L309.5 316.3 L314.5 314.0 L318.5 306.4 L322.5 299.9 L326.5 294.9 L331.5 290.5 L335.5 283.5 L339.5 278.5 L343.5 276.9 L348.5 274.7 L352.5 270.3 L356.5 268.6 L360.5 269.2 L364.5 267.6 L369.5 266.3 L373.5 266.4 L377.5 267.7 L381.5 267.2 L386.5 263.2 L390.5 258.2 L394.5 253.5 L398.5 243.9 L403.5 230.9 L407.5 219.3 L411.5 208.5 L415.5 199.0 L419.5 191.8 L424.5 188.1 L428.5 185.0 L432.5 185.0 L436.5 185.7 L441.5 184.6 L445.5 188.4 L449.5 190.3 L453.5 192.6 L458.5 195.4 L462.5 199.8 L466.5 203.3 L470.5 203.8 L474.5 204.6 L479.5 207.3 L483.5 208.9 L487.5 210.1 L491.5 212.8 L496.5 217.0 L500.5 221.0 L504.5 225.6 L508.5 230.0 L513.5 234.2 L517.5 236.6 L521.5 241.1 L525.5 244.4 L530.5 249.7 L534.5 255.2 L538.5 259.0 L542.5 259.7 L546.5 258.4 L551.5 260.9 L555.5 266.3 L559.5 270.1 L563.5 276.7 L568.5 282.4 L572.5 288.9 L576.5 294.6 L580.5 297.6 L585.5 300.0 L589.5 303.3 L593.5 310.1 L597.5 315.6 L601.5 319.0 L606.5 322.8 L610.5 327.0 L614.5 330.9 L618.5 334.9 L623.5 340.9 L627.5 347.2 L631.5 356.0 L635.5 361.0 L640.5 365.2 L644.5 373.3 L648.5 381.1 L652.5 386.4 L656.5 389.3 L661.5 390.3 L665.5 391.9 L669.5 391.7 L673.5 391.0 L678.5 394.3 L682.5 398.2 L686.5 399.3 L690.5 399.7 L695.5 401.8 L699.5 401.7 L703.5 401.1 L707.5 397.2 L712.5 397.2 L716.5 398.3 L720.5 399.4 L724.5 400.6 L728.5 399.1 L733.5 399.8 L737.5 400.4 L741.5 398.7 L745.5 392.5 L750.5 387.5 L754.5 383.7 L758.5 379.7 L762.5 378.0 L767.5 375.7 L771.5 372.9" fill="none" stroke="#d6d8e0" stroke-width="1.25" stroke-linejoin="round"/>
</svg>
  <!-- axes -->
  <div class="abs" style="left:917px;top:0;width:1px;height:483px;background:#6a6d79"></div>
  <div class="abs" style="left:0;top:455px;width:981px;height:1px;background:#6a6d79"></div>
  <!-- legend -->
  <div class="abs" style="left:8px;top:32px;width:61px;height:24px;border:1px solid #e2364a;border-radius:4px"></div>
  <div class="abs" style="left:100px;top:32px;width:61px;height:24px;border:1px solid #2a5ff0;border-radius:4px"></div>
  <div class="lg" style="left:5px;top:63px;width:88px;height:46px"></div>
  <div class="lg" style="left:5px;top:109px;width:53px;height:22.5px;border-radius:0 0 2px 2px"></div>
  <svg class="ic" style="left:36px;top:112px;stroke-width:1.1" width="18" height="16" viewBox="0 0 18 16"><path d="M1.2 8 C3.8 0.8 14.2 0.8 16.8 8 C14.2 15.2 3.8 15.2 1.2 8 Z"/><circle cx="9" cy="8" r="2.7"/><path d="M3.6 14 L14.8 2.2" stroke="#1c202b" stroke-width="3.2"/><path d="M3.2 14.4 L15.2 1.8"/></svg>
  <div class="abs" style="left:10px;top:134.4px;width:27.6px;height:20.2px;border:1px solid #363a45;border-radius:3px;background:#151924"></div>
  <svg class="ic" style="left:19.2px;top:141.4px;stroke-width:1.4;stroke:#e4e6ec" width="9" height="6" viewBox="0 0 9 6"><path d="M1.1 4.7 L4.5 1.6 L7.9 4.7"/></svg>
  <!-- currency button -->
  <div class="abs" style="left:921px;top:4.5px;width:56px;height:25px;border:1px solid #434651;border-radius:4px;background:#131722"></div>
  <svg class="ic" style="left:966.7px;top:15.6px;stroke-width:1.15" width="6" height="4" viewBox="0 0 6 4"><path d="M0.6 0.7 L3 3 L5.4 0.7"/></svg>
  <!-- price scale -->
  <!-- price label -->
  <div class="abs" style="left:917.5px;top:295.2px;width:59.5px;height:30.6px;background:#4caf50;border-radius:0 2px 2px 0"></div>
  <!-- time scale -->
  <svg class="ic" style="left:942px;top:462px;stroke-width:1.2;stroke:#d1d4dc" width="16" height="16" viewBox="0 0 16 16"><path d="M4.6 2 H11.4 L14.8 8 L11.4 14 H4.6 L1.2 8 Z"/><circle cx="8" cy="8" r="1.8"/></svg>
  <!-- TV logo -->
  <svg class="abs" style="left:10px;top:424px;overflow:visible" width="36" height="20" viewBox="62 467 36 20"><g fill="#d9dbe2" stroke="#131722" stroke-width="2.6" stroke-linejoin="round" paint-order="stroke"><path d="M63.9 468.9 H76 V483.8 H69.9 V474.5 H63.9 Z"/><circle cx="80.8" cy="472.1" r="2.7"/><path d="M88.1 468.9 H94.1 L88.1 483.8 H81.5 Z"/></g></svg>
  <!-- lightning -->
  <svg class="abs" style="left:708px;top:431px;overflow:visible" width="24" height="24" viewBox="0 0 24 24"><circle cx="11.7" cy="11.2" r="10.9" fill="#1c1a2b"/><circle cx="11.7" cy="11.2" r="9.4" fill="#1e1b2e" stroke="#a54fc2" stroke-width="1.3"/><path d="M13.8 5.6 L8.2 11.6 H11.4 L9.8 16.8 L15.4 10.6 H12.2 Z" fill="#c04fe0"/></svg>

  <div class="t" id="chg" style="left:8.50px;top:11.37px;font-size:12px;color:#4fae54;letter-spacing:0.17px;-webkit-text-stroke:0.25px #4fae54;">+0.00185 (+0.17%)</div>
  <div class="t" id="bid" style="left:16.17px;top:38.87px;font-size:12px;color:#f23645;letter-spacing:0.28px;-webkit-text-stroke:0.4px #f23645;">1.0702</div>
  <div class="t" id="bids" style="left:55.89px;top:37.43px;font-size:9.4px;color:#f23645;letter-spacing:0.00px;-webkit-text-stroke:0.35px #f23645;">8</div>
  <div class="t" id="spr" style="left:76.24px;top:39.06px;font-size:11.5px;color:#d9dbe1;letter-spacing:-0.51px;font-weight:bold;">0.1</div>
  <div class="t" id="ask" style="left:107.58px;top:38.86px;font-size:12px;color:#3668f5;letter-spacing:0.32px;-webkit-text-stroke:0.4px #3668f5;">1.0702</div>
  <div class="t" id="asks" style="left:147.21px;top:37.56px;font-size:9.4px;color:#3668f5;letter-spacing:0.00px;-webkit-text-stroke:0.35px #3668f5;">9</div>
  <div class="t" id="ema1l" style="left:9.18px;top:66.96px;font-size:11.5px;color:#787b86;letter-spacing:-0.90px;-webkit-text-stroke:0.2px #787b86;">EMA</div>
  <div class="t" id="ema1v" style="left:40.59px;top:67.17px;font-size:12px;color:#f23645;letter-spacing:0.47px;-webkit-text-stroke:0.3px #f23645;">1.06737</div>
  <div class="t" id="ema2l" style="left:9.18px;top:90.96px;font-size:11.5px;color:#787b86;letter-spacing:-0.90px;-webkit-text-stroke:0.2px #787b86;">EMA</div>
  <div class="t" id="ema2v" style="left:41.07px;top:90.70px;font-size:12px;color:#e4e6ec;letter-spacing:0.32px;font-weight:bold;">1.06434</div>
  <div class="t" id="vol" style="left:9.61px;top:114.86px;font-size:11.5px;color:#575b68;letter-spacing:0.08px;">Vol</div>
  <div class="t" id="usd" style="left:924.66px;top:10.93px;font-size:12px;color:#eceef2;letter-spacing:-0.47px;-webkit-text-stroke:0.3px #eceef2;transform:scaleX(0.86);transform-origin:0 50%;">USD</div>
  <div class="t" id="plab" style="left:924.84px;top:298.37px;font-size:12px;color:#fff;letter-spacing:-0.11px;font-weight:bold;">1.07027</div>
  <div class="t" id="ptime" style="left:924.60px;top:312.36px;font-size:12px;color:#d3efd4;letter-spacing:-0.12px;font-weight:bold;">05:12:15</div>
  <div class="t" id="sc0" style="left:924.36px;top:30.01px;font-size:12px;color:#626571;letter-spacing:-0.24px;clip-path:inset(4.6px 0 0 0);">1.13000</div>
  <div class="t" id="sc1" style="left:924.36px;top:75.01px;font-size:12px;color:#626571;letter-spacing:-0.24px;">1.12000</div>
  <div class="t" id="sc2" style="left:924.34px;top:120.01px;font-size:12px;color:#626571;letter-spacing:-0.08px;">1.11000</div>
  <div class="t" id="sc3" style="left:924.36px;top:164.01px;font-size:12px;color:#626571;letter-spacing:-0.24px;">1.10000</div>
  <div class="t" id="sc4" style="left:924.66px;top:209.01px;font-size:12px;color:#626571;letter-spacing:-0.28px;">1.09000</div>
  <div class="t" id="sc5" style="left:924.66px;top:254.01px;font-size:12px;color:#626571;letter-spacing:-0.28px;">1.08000</div>
  <div class="t" id="sc7" style="left:924.66px;top:344.01px;font-size:12px;color:#626571;letter-spacing:-0.28px;">1.06000</div>
  <div class="t" id="sc8" style="left:924.66px;top:389.01px;font-size:12px;color:#626571;letter-spacing:-0.28px;">1.05000</div>
  <div class="t" id="sc9" style="left:924.49px;top:434.01px;font-size:12px;color:#626571;letter-spacing:-0.26px;">1.04000</div>
  <div class="t" id="tm0" style="left:32.12px;top:463.40px;font-size:12px;color:#575a66;letter-spacing:0.48px;">Apr</div>
  <div class="t" id="tm1" style="left:114.88px;top:463.40px;font-size:12px;color:#575a66;letter-spacing:-0.23px;">May</div>
  <div class="t" id="tm2" style="left:213.74px;top:463.40px;font-size:12px;color:#575a66;letter-spacing:-0.04px;">Jun</div>
  <div class="t" id="tm3" style="left:308.06px;top:463.40px;font-size:12px;color:#575a66;letter-spacing:0.13px;">Jul</div>
  <div class="t" id="tm4" style="left:394.19px;top:463.40px;font-size:12px;color:#575a66;letter-spacing:0.01px;">Aug</div>
  <div class="t" id="tm5" style="left:491.52px;top:463.40px;font-size:12px;color:#575a66;letter-spacing:-0.42px;">Sep</div>
  <div class="t" id="tm6" style="left:581.32px;top:463.40px;font-size:12px;color:#575a66;letter-spacing:0.26px;">Oct</div>
  <div class="t" id="tm7" style="left:674.05px;top:463.40px;font-size:12px;color:#575a66;letter-spacing:0.12px;">Nov</div>
  <div class="t" id="tm8" style="left:766.49px;top:463.40px;font-size:12px;color:#575a66;letter-spacing:-0.10px;">Dec</div>
  <div class="t" id="tm9" style="left:852.59px;top:463.40px;font-size:12px;color:#575a66;letter-spacing:-0.30px;">2024</div>
</div>
<div id="range">
  <div class="sep" style="left:275.8px;top:8.7px;height:22.5px"></div>
  <svg class="ic" style="left:290px;top:10px;stroke-width:1.15" width="20" height="19" viewBox="0 0 20 19"><path d="M1.4 8.7 V4.1 A1.8 1.8 0 0 1 3.2 2.3 H17.1 A1.8 1.8 0 0 1 18.9 4.1 V15.6 A1.8 1.8 0 0 1 17.1 17.4 H10.3 M1.4 6.2 H18.9 M6.4 -0.2 V4.2 M13.6 -0.2 V4.2 M0.2 14.6 H8 M4.3 11.2 L8 14.6 L4.3 18"/></svg>
  <style>.rg{top:13.6px;font-size:13.5px;color:#d1d4dc;letter-spacing:-0.5px}</style>

  <div class="t" id="r1" style="left:14.39px;top:13.00px;font-size:14px;color:#d1d4dc;letter-spacing:-2.22px;-webkit-text-stroke:0.25px #d1d4dc;">1D</div>
  <div class="t" id="r2" style="left:41.84px;top:13.00px;font-size:14px;color:#d1d4dc;letter-spacing:-1.70px;-webkit-text-stroke:0.25px #d1d4dc;">5D</div>
  <div class="t" id="r3" style="left:69.79px;top:13.00px;font-size:14px;color:#d1d4dc;letter-spacing:-1.12px;-webkit-text-stroke:0.25px #d1d4dc;">1M</div>
  <div class="t" id="r4" style="left:98.78px;top:13.00px;font-size:14px;color:#d1d4dc;letter-spacing:-1.31px;-webkit-text-stroke:0.25px #d1d4dc;">3M</div>
  <div class="t" id="r5" style="left:127.96px;top:13.00px;font-size:14px;color:#d1d4dc;letter-spacing:-1.08px;-webkit-text-stroke:0.25px #d1d4dc;">6M</div>
  <div class="t" id="r6" style="left:157.28px;top:13.00px;font-size:14px;color:#d1d4dc;letter-spacing:-1.63px;-webkit-text-stroke:0.25px #d1d4dc;">YTD</div>
  <div class="t" id="r7" style="left:193.64px;top:13.00px;font-size:14px;color:#d1d4dc;letter-spacing:-1.43px;-webkit-text-stroke:0.25px #d1d4dc;">1Y</div>
  <div class="t" id="r8" style="left:221.32px;top:13.00px;font-size:14px;color:#d1d4dc;letter-spacing:-2.57px;-webkit-text-stroke:0.25px #d1d4dc;">5Y</div>
  <div class="t" id="r9" style="left:248.97px;top:13.00px;font-size:14px;color:#d1d4dc;letter-spacing:0.37px;-webkit-text-stroke:0.25px #d1d4dc;">All</div>
  <div class="t" id="clock" style="left:880.72px;top:13.37px;font-size:13.4px;color:#dfe1e7;letter-spacing:0.12px;-webkit-text-stroke:0.5px #dfe1e7;">16:47:44 (UTC)</div>
</div>
<div id="bottom">
  <svg class="ic" style="left:121px;top:16.8px;stroke-width:1.2" width="8" height="5" viewBox="0 0 8 5"><path d="M0.7 0.8 L4 4 L7.3 0.8"/></svg>
  <svg class="ic" style="left:917px;top:13.5px;stroke-width:1.15" width="20" height="10" viewBox="0 0 20 10"><path d="M0.9 7.2 L9.4 0.8 L17.9 7.2"/></svg>
  <svg class="ic" style="left:953.5px;top:10.5px;stroke-width:1.3" width="17" height="17" viewBox="0 0 17 17"><path d="M1.1 5.5 V3.4 A2.5 2.5 0 0 1 3.6 0.9 H12.8 A2.5 2.5 0 0 1 15.3 3.4 V5.5 M1.1 11.4 V13.5 A2.5 2.5 0 0 0 3.6 16 H12.8 A2.5 2.5 0 0 0 15.3 13.5 V11.4"/></svg>
  <style>.bt{top:13.2px;font-size:13.5px;color:#d1d4dc;letter-spacing:-0.25px}</style>

  <div class="t" id="b1" style="left:15.12px;top:12.20px;font-size:14px;color:#d1d4dc;letter-spacing:-0.17px;-webkit-text-stroke:0.25px #d1d4dc;">Stock Screener</div>
  <div class="t" id="b2" style="left:153.89px;top:12.20px;font-size:14px;color:#d1d4dc;letter-spacing:-0.07px;-webkit-text-stroke:0.25px #d1d4dc;">Pine Editor</div>
  <div class="t" id="b3" style="left:253.71px;top:12.20px;font-size:14px;color:#d1d4dc;letter-spacing:0.11px;-webkit-text-stroke:0.25px #d1d4dc;">Strategy Tester</div>
  <div class="t" id="b4" style="left:381.09px;top:12.20px;font-size:14px;color:#d1d4dc;letter-spacing:-0.26px;-webkit-text-stroke:0.25px #d1d4dc;">Trading Panel</div>
</div>
<div id="right">
<svg class="ic" style="left:0;top:0;stroke-width:1.15" width="42" height="561" viewBox="1037 43 42 561">
  <!-- watchlist -->
  <rect x="1048.5" y="55.3" width="23.5" height="22.6" rx="2.2"/><path d="M1053 61.6 H1067.2 M1053 66.6 H1067.2 M1053 71.6 H1067.2"/>
  <!-- alarm -->
  <circle cx="1059.6" cy="112.6" r="10.3"/><path d="M1059.7 107.6 V114.2 H1055.2"/><path d="M1048.6 107.4 A5 5 0 0 1 1055 101.6 M1064.2 101.6 A5 5 0 0 1 1070.8 107.4"/>
  <!-- note plus -->
  <path d="M1049.4 143.2 V151.4 M1045.3 147.3 H1053.5"/><path d="M1055.6 145.8 H1069.6 A2.4 2.4 0 0 1 1072 148.2 V166 A2.4 2.4 0 0 1 1069.6 168.4 H1050.9 A2.4 2.4 0 0 1 1048.5 166 V153.6"/>
  <rect x="1052.8" y="151.9" width="15" height="4.4" rx="2.2"/><path d="M1053.2 159.9 H1067.2 M1053.2 164 H1067.2"/>
  <!-- layers -->
  <path d="M1059.7 191.3 L1071.2 198.1 L1059.7 204.6 L1048.4 198.1 Z M1048.4 203.9 L1059.7 210.4 L1071.2 203.9"/>
  <!-- flame -->
  <path d="M1059.3 232.3 C1060.6 236 1063.6 238.6 1063.4 243.4 C1065.2 242.6 1066.2 240.8 1066.4 239 C1069.4 241.8 1070.8 244.8 1070.6 248.2 C1070.4 253 1067 257.2 1062.4 258.6 C1063.4 256.4 1062.6 253.6 1060 251.6 C1058.6 254.2 1057.2 256.2 1057.6 258.6 C1052.8 257.4 1049.2 253 1049.2 248 C1049.2 241.4 1056.6 238.6 1059.3 232.3 Z"/>
  <!-- calendar -->
  <rect x="1048.5" y="283" width="23.1" height="21.8" rx="2.4"/><path d="M1048.5 289.6 H1071.6"/><rect x="1052.4" y="281.2" width="2.9" height="4.8" rx="1.2" fill="#131722"/><rect x="1064.5" y="281.2" width="2.9" height="4.8" rx="1.2" fill="#131722"/>
  <!-- bulb -->
  <path d="M1055 344 C1055 342 1049.9 340.4 1049.9 335.6 A9.3 9.3 0 0 1 1068.5 335.6 C1068.5 340.4 1063.4 342 1063.4 344 Z"/><path d="M1055 344 V346.6 A1.6 1.6 0 0 0 1056.6 348.2 H1061.8 A1.6 1.6 0 0 0 1063.4 346.6 V344 M1057 350.4 H1061.4 M1056.7 336.5 H1061.9 M1059.3 336.5 V343.6"/>
  <path d="M1043 367.6 H1076" stroke="#434651" stroke-width="1"/>
  <!-- chat -->
  <path d="M1050.3 385.4 H1065.5 A2 2 0 0 1 1067.5 387.4 V398.5 A2 2 0 0 1 1065.5 400.5 H1052.4 L1048.3 405 V387.4 A2 2 0 0 1 1050.3 385.4 Z"/><path d="M1067.5 393.3 H1069.8 A2 2 0 0 1 1071.8 395.3 V408.6 L1068 404.2 H1060.2 A2.6 2.6 0 0 1 1057.6 401.6 V400.5"/>
  <!-- bulb with waves -->
  <path d="M1055.4 446.6 C1055.4 444.8 1050.7 443.2 1050.7 438.8 A8.5 8.5 0 0 1 1067.7 438.8 C1067.7 443.2 1063 444.8 1063 446.6 Z"/><path d="M1055.4 446.6 V449.2 A1.5 1.5 0 0 0 1056.9 450.7 H1061.5 A1.5 1.5 0 0 0 1063 449.2 V446.6 M1057.2 453 H1061.2 M1056.7 440 H1061.7 M1059.2 440 V446.2"/>
  <path d="M1048.2 433.4 C1046.2 436.8 1046.2 441.4 1048.2 444.8 M1045.2 431.8 C1042.6 436.4 1042.6 441.8 1045.2 446.4 M1070.2 433.4 C1072.2 436.8 1072.2 441.4 1070.2 444.8 M1073.2 431.8 C1075.8 436.4 1075.8 441.8 1073.2 446.4"/>
  <!-- play with waves -->
  <path d="M1052.2 479.2 V491.4 L1061.8 485.3 Z"/><path d="M1065 478.8 C1068.6 482.6 1068.6 488 1065 491.8 M1068.6 473.6 C1075.4 480.4 1075.4 490.4 1068.6 497.4"/>
  <!-- bell -->
  <path d="M1053 535.5 V527 C1053 522.6 1056 520.2 1058.6 519.6 C1058.6 517.8 1061.4 517.8 1061.4 519.6 C1064 520.2 1068.6 522.6 1068.6 527 V535.5"/><rect x="1050.2" y="535.5" width="21" height="3.2" rx="1.2"/><path d="M1057.4 539 C1058.2 541.6 1061.8 541.6 1062.6 539"/>
  <!-- help -->
  <circle cx="1059.6" cy="589.4" r="12.3"/><path d="M1055.4 586 C1055.4 580.6 1063.8 580.6 1063.8 586 C1063.8 589.4 1059.7 589.6 1059.7 593.2"/><circle cx="1059.7" cy="596.4" r="1.1"/>
</svg>

</div>
</body>
</html>
